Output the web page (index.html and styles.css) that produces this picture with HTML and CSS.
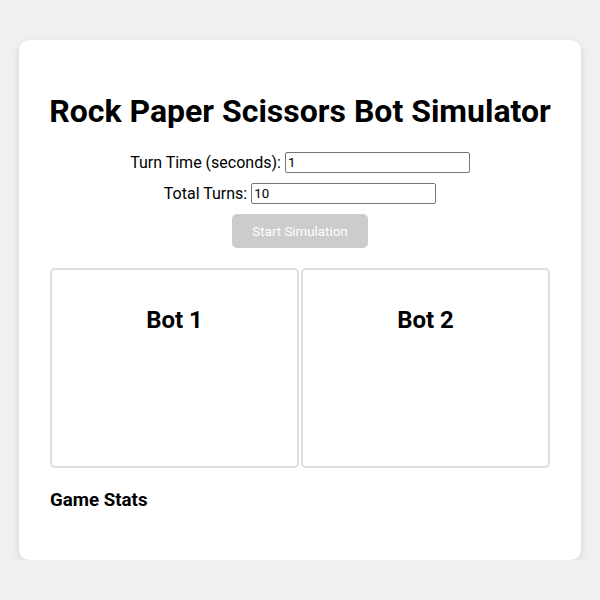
FILE: index.html
```html
<!DOCTYPE html>
<html>
<head>
<meta charset="utf-8">
<link rel="stylesheet" href="styles.css">
</head>
<body>
<div class="card">
  <h1 class="title">Rock Paper Scissors Bot Simulator</h1>
  <div class="controls">
    <div class="row"><label>Turn Time (seconds):</label> <input type="text" value="1"></div>
    <div class="row"><label>Total Turns:</label> <input type="text" value="10"></div>
    <button class="start" disabled>Start Simulation</button>
  </div>
  <div class="bots">
    <div class="bot"><h2>Bot 1</h2></div>
    <div class="bot"><h2>Bot 2</h2></div>
  </div>
  <h3 class="stats">Game Stats</h3>
</div>
</body>
</html>
```
FILE: styles.css
```css
html, body { margin: 0; padding: 0; }
body {
  background: #f0f0f0;
  font-family: Roboto, "Liberation Sans", sans-serif;
  color: #000;
}
.card {
  width: 500px;
  margin: 40px auto 0;
  padding: 31px 31px 31px;
  background: #fff;
  border-radius: 10px;
  box-shadow: 0 3px 8px rgba(0,0,0,0.12);
}
.title {
  font-size: 32px;
  font-weight: 700;
  text-align: center;
  white-space: nowrap;
  margin: 22px -10px 22px;
  line-height: 37px;
}
.controls {
  display: flex;
  flex-direction: column;
  align-items: center;
  gap: 10px;
}
.row {
  font-size: 16px;
  display: flex;
  align-items: center;
  gap: 4px;
  height: 21px;
}
.row input {
  width: 179px;
  height: 17px;
  padding: 1px 2px;
  border: 1px solid #767676;
  border-radius: 2px;
  font-family: Roboto, "Liberation Sans", sans-serif;
  font-size: 13.33px;
}
.start {
  width: 136px;
  height: 34px;
  background: #ccc;
  color: #fff;
  border: none;
  border-radius: 5px;
  font-family: Roboto, "Liberation Sans", sans-serif;
  font-size: 13.33px;
}
.bots {
  display: flex;
  justify-content: space-between;
  margin-top: 20px;
}
.bot {
  width: 245px;
  height: 196px;
  border: 2px solid #ddd;
  border-radius: 5px;
  text-align: center;
}
.bot h2 {
  font-size: 24px;
  font-weight: 700;
  margin: 36px 0 0;
}
.stats {
  font-size: 18.72px;
  font-weight: 700;
  margin: 21px 0 18px;
}
```
